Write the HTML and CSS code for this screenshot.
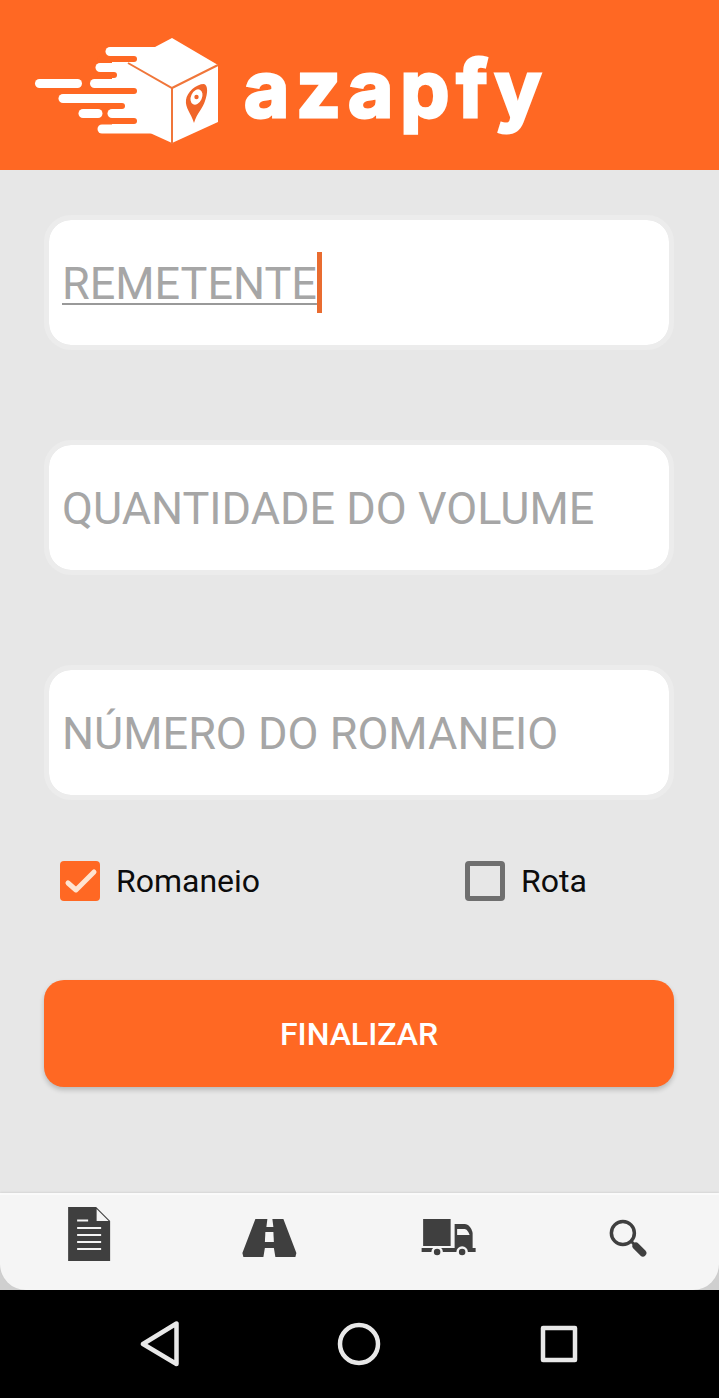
FILE: index.html
```html
<!DOCTYPE html>
<html lang="pt-BR">
<head>
<meta charset="utf-8">
<title>azapfy</title>
<link rel="stylesheet" href="styles.css">
</head>
<body>
<div class="app">
  <header class="brand">
    <svg class="brand-mark" width="190" height="110" viewBox="32 36 190 110" aria-hidden="true">
      <path class="w-fill" d="M112 47H155L172 38L218 65V122L172 143L150 133H112Z"/>
      <g class="notch">
        <path d="M100 59H134"/><path d="M100 75H114"/><path d="M100 91H134"/><path d="M100 106H122"/><path d="M100 121H134"/>
      </g>
      <g class="streak">
        <path d="M110 51.500H150"/><path d="M100 67.500H150"/><path d="M94.500 83.500H150"/><path d="M39.500 83.500H77.500"/>
        <path d="M63 98.500H150"/><path d="M112 113.500H150"/><path d="M83 113.500H98"/><path d="M102 129H150"/>
      </g>
      <path class="edge" d="M128 63L172 88L218 65M172 88V144"/>
      <path class="pin" d="M194 123C191 113 185 108 186 100C187 92 196 84 204 84C208 85 208 93 205 101C203 108 197 113 194 123Z"/>
      <ellipse class="w-fill" cx="196.500" cy="97" rx="5.500" ry="8" transform="rotate(25 196.500 97)"/>
      <circle class="pin" cx="196.500" cy="97" r="2.200"/>
    </svg>
    <span class="brand-name">azapfy</span>
  </header>

  <main class="content">
    <div class="field"><span class="value typed">REMETENTE</span><span class="caret"></span></div>
    <div class="field"><span class="value">QUANTIDADE DO VOLUME</span></div>
    <div class="field"><span class="value">NÚMERO DO ROMANEIO</span></div>

    <div class="options">
      <label class="option">
        <span class="box box-on">
          <svg width="40" height="40" viewBox="0 0 40 40" aria-hidden="true"><path d="M8 22L16 29L34 11"/></svg>
        </span>
        <span>Romaneio</span>
      </label>
      <label class="option">
        <span class="box box-off"></span>
        <span>Rota</span>
      </label>
    </div>

    <button class="submit" type="button">FINALIZAR</button>
  </main>

  <div class="tabs-wrap">
    <nav class="tabs">
      <a class="tab tab-tall">
        <svg width="44" height="56" viewBox="67.875 1206 44 56" aria-hidden="true">
          <path class="ink" d="M68 1207H96L110 1221V1261H68Z"/>
          <path class="paper" d="M96.500 1209L108.500 1221H96.500Z"/>
          <path class="rule" d="M77 1220.500H88M77 1228H101M77 1235H101M77 1242H101M77 1249H101"/>
        </svg>
      </a>
      <a class="tab">
        <svg width="56" height="40" viewBox="241.625 1218 56 40" aria-hidden="true">
          <path class="ink" d="M255 1219H267L266 1227H273L272 1219H283L296 1253L295 1257H275L273.500 1248H264.500L263 1257H243L242 1253Z"/>
          <path class="paper" d="M265 1232H273L273.500 1242H264.500Z"/>
        </svg>
      </a>
      <a class="tab">
        <svg width="56" height="40" viewBox="421.375 1218 56 40" aria-hidden="true">
          <rect class="ink" x="423.500" y="1219" width="27.500" height="27"/>
          <path class="ink" d="M455 1224H465C469 1224 472 1228 473 1233V1248H455Z"/>
          <path class="paper" d="M457.500 1229H465C467 1229 469 1232 470 1235H457.500Z"/>
          <rect class="ink" x="422" y="1248" width="54" height="4"/>
          <circle class="wheel" cx="437.500" cy="1252" r="4.500"/>
          <circle class="wheel" cx="462.500" cy="1252" r="4.500"/>
        </svg>
      </a>
      <a class="tab">
        <svg width="40" height="40" viewBox="609.125 1218 40 40" aria-hidden="true">
          <circle class="lens" cx="623" cy="1233" r="11.500"/>
          <path class="handle-thin" d="M631 1241L636 1246"/>
          <path class="handle" d="M636 1246L643 1253"/>
        </svg>
      </a>
    </nav>
  </div>

  <div class="sysnav">
    <svg width="40" height="46" viewBox="140 1321 40 46" aria-hidden="true"><path class="sys" d="M143 1344L176.500 1323.500V1364Z"/></svg>
    <svg width="46" height="46" viewBox="336 1321 46 46" aria-hidden="true"><circle class="sys" cx="359" cy="1344" r="19"/></svg>
    <svg width="40" height="40" viewBox="538 1324 40 40" aria-hidden="true"><rect class="sys" x="543" y="1328" width="32" height="32"/></svg>
  </div>
</div>
</body>
</html>
```
FILE: styles.css
```css
* {
  box-sizing: border-box;
}

html,
body {
  margin: 0;
  padding: 0;
}

body {
  background: #000;
  font-family: Roboto, "Liberation Sans", sans-serif;
}

.app {
  width: 719px;
  height: 1398px;
  display: flex;
  flex-direction: column;
  overflow: hidden;
  background: #e7e7e7;
}

/* Header */
.brand {
  height: 170px;
  flex: none;
  background: #ff6823;
  display: flex;
  align-items: flex-start;
  padding: 36px 0 0 32px;
}

.brand-mark {
  flex: none;
  display: block;
}

.w-fill {
  fill: #fff;
}

.notch path {
  fill: none;
  stroke: #ff6823;
  stroke-width: 6;
  stroke-linecap: round;
}

.streak path {
  fill: none;
  stroke: #fff;
  stroke-width: 9;
  stroke-linecap: round;
}

.edge {
  fill: none;
  stroke: #f0763a;
  stroke-width: 2;
}

.pin {
  fill: #f0662a;
}

.brand-name {
  margin: 3px 0 0 22px;
  font-family: Inter, sans-serif;
  font-weight: 700;
  font-size: 78px;
  line-height: 100px;
  letter-spacing: 7px;
  color: #fff;
  -webkit-text-stroke: 3px #fff;
}

/* Form */
.content {
  flex: 1;
  display: flex;
  flex-direction: column;
  padding: 45px 45px 0 44px;
}

.field {
  height: 135px;
  flex: none;
  margin-bottom: 90px;
  border: 5px solid #ececec;
  border-radius: 27px;
  background: #fff;
  background-clip: padding-box;
  padding-left: 13px;
  display: flex;
  align-items: center;
  color: #a6a6a6;
  font-size: 45px;
}

.value {
  line-height: 60px;
  position: relative;
  top: 1px;
}

.typed {
  text-decoration: underline;
  text-decoration-color: #999;
  text-decoration-thickness: 2px;
  text-underline-offset: 4px;
}

.caret {
  width: 5px;
  height: 61px;
  background: #e96c30;
  flex: none;
}

.options {
  display: grid;
  grid-template-columns: 405px 1fr;
  padding-left: 16px;
  margin-top: -29px;
}

.option {
  display: flex;
  align-items: center;
  gap: 16px;
  font-size: 32px;
  line-height: 40px;
  color: #0c0c0c;
}

.box {
  width: 40px;
  height: 40px;
  flex: none;
  border-radius: 4px;
}

.box svg {
  display: block;
}

.box svg path {
  fill: none;
  stroke: #ffe4d0;
  stroke-width: 5;
  stroke-linecap: round;
  stroke-linejoin: round;
}

.box-on {
  background: #ff6823;
}

.box-off {
  border: 5px solid #6f6f6f;
}

.submit {
  height: 107px;
  flex: none;
  margin-top: 79px;
  border: 0;
  border-radius: 20px;
  background: #ff6823;
  box-shadow: 0 3px 5px rgba(0, 0, 0, 0.2);
  color: #fff;
  font-family: Roboto, sans-serif;
  font-weight: 500;
  font-size: 32px;
}

/* Bottom tabs */
.tabs-wrap {
  flex: none;
  background: #cfcfcf;
}

.tabs {
  height: 97px;
  background: #f5f5f5;
  border-top: 2px solid #fafafa;
  border-radius: 0 0 26px 26px;
  display: grid;
  grid-template-columns: repeat(4, 1fr);
  align-items: start;
  box-shadow: 0 -1px 2px rgba(0, 0, 0, 0.08);
}

.tab {
  display: flex;
  justify-content: center;
  height: 80px;
  align-items: flex-start;
  padding-top: 23px;
}

.tab-tall {
  padding-top: 11px;
}

.tab svg {
  display: block;
}

.ink {
  fill: #3f3f3f;
}

.paper {
  fill: #f5f5f5;
}

.rule {
  fill: none;
  stroke: #f5f5f5;
  stroke-width: 2;
}

.wheel {
  fill: #3f3f3f;
  stroke: #f5f5f5;
  stroke-width: 2.500;
}

.lens {
  fill: none;
  stroke: #3f3f3f;
  stroke-width: 3.500;
}

.handle-thin {
  fill: none;
  stroke: #3f3f3f;
  stroke-width: 3;
}

.handle {
  fill: none;
  stroke: #3f3f3f;
  stroke-width: 7;
  stroke-linecap: round;
}

/* System navigation */
.sysnav {
  height: 108px;
  flex: none;
  background: #000;
  display: flex;
  align-items: center;
  gap: 156px;
  padding-left: 140px;
}

.sys {
  fill: none;
  stroke: #e8e8e8;
  stroke-width: 4.500;
  stroke-linejoin: round;
}
```
